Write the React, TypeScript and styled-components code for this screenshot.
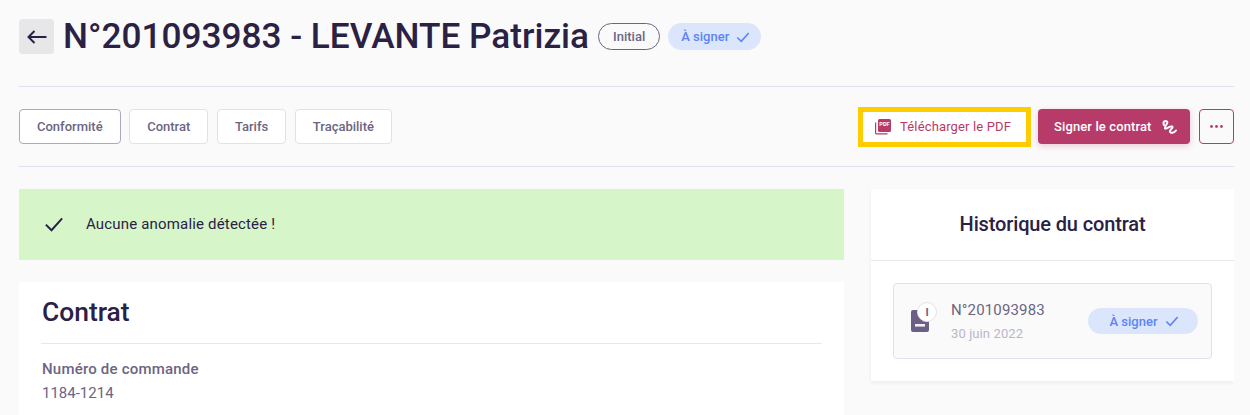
import * as React from "react";
import styled, { createGlobalStyle } from "styled-components";

const GlobalStyle = createGlobalStyle`
  html, body {
    margin: 0;
    height: 100%;
    overflow: hidden;
    background: #fafafb;
    font-family: Roboto, "Liberation Sans", sans-serif;
    color: #2a2145;
  }
`;

const Page = styled.div`
  width: 1215px;
  height: 415px;
  margin-left: 19px;
  overflow: hidden;
`;

const TitleRow = styled.header`
  display: flex;
  align-items: flex-start;
  height: 87px;
  padding-top: 19px;
  box-sizing: border-box;
  border-bottom: 1px solid #dfe0ee;
`;

const BackButton = styled.button`
  width: 35px;
  height: 35px;
  padding: 0;
  margin-right: 9px;
  display: flex;
  align-items: center;
  justify-content: center;
  background: #e7e7ea;
  border: 0;
  border-radius: 4px;
  color: #2a2145;
`;

const Title = styled.h1`
  margin: 0 9px 0 0;
  font-size: 35.2px;
  line-height: 35px;
  font-weight: 500;
  white-space: nowrap;
  color: #2a2145;
`;

const Pill = styled.span<{ $variant: "outline" | "blue"; $wide?: boolean; $tall?: boolean }>`
  display: inline-flex;
  align-items: center;
  justify-content: center;
  gap: 7px;
  box-sizing: border-box;
  height: ${p => (p.$tall ? "27px" : "26px")};
  border-radius: 14px;
  font-size: 13px;
  font-weight: 500;
  white-space: nowrap;
  color: ${p => (p.$variant === "blue" ? "#5b84f5" : "#6c6582")};
  background: ${p => (p.$variant === "blue" ? "#dbe6fd" : "transparent")};
  border: ${p => (p.$variant === "blue" ? "none" : "1px solid #6c6582")};
  width: ${p => (p.$wide ? "110px" : "auto")};
  padding: ${p => (p.$variant === "blue" ? "0 11px 0 13px" : "0 14px")};
`;

const TitlePills = styled.div`
  display: flex;
  gap: 8px;
  margin-top: 4px;
`;

const Toolbar = styled.div`
  display: flex;
  justify-content: space-between;
  align-items: center;
  height: 79px;
  border-bottom: 1px solid #dfe0ee;
`;

const Tabs = styled.nav`
  display: flex;
  gap: 8.6px;
`;

const Tab = styled.button<{ $active?: boolean }>`
  height: 35px;
  padding: 0 17px;
  background: #fff;
  border: 1px solid ${p => (p.$active ? "#a9a9c4" : "#e1e1ee")};
  border-radius: 4px;
  font-family: inherit;
  font-size: 13px;
  font-weight: 500;
  color: #6c6582;
`;

const Actions = styled.div`
  display: flex;
  align-items: center;
`;

const PdfButton = styled.button`
  display: flex;
  align-items: center;
  gap: 9px;
  box-sizing: border-box;
  width: 173px;
  height: 40px;
  margin-right: 7px;
  padding: 0 0 0 12px;
  background: #fff;
  border: 5px solid #ffcc00;
  font-family: inherit;
  font-size: 13px;
  color: #b73b69;
  letter-spacing: 0.15px;
`;

const SignButton = styled.button`
  display: flex;
  align-items: center;
  gap: 9px;
  height: 35px;
  width: 152px;
  padding: 0 0 0 16px;
  margin-right: 9px;
  background: #b73b69;
  border: 0;
  border-radius: 4px;
  box-shadow: 0 2px 6px rgba(183, 59, 105, 0.25);
  font-family: inherit;
  font-size: 13px;
  font-weight: 500;
  letter-spacing: 0.12px;
  color: #fff;
`;

const MoreButton = styled.button`
  display: flex;
  align-items: center;
  justify-content: center;
  width: 35px;
  height: 35px;
  padding: 0;
  background: transparent;
  border: 1px solid #b73b69;
  border-radius: 4px;
`;

const Columns = styled.div`
  display: grid;
  grid-template-columns: 825px 363px;
  column-gap: 27px;
  padding-top: 22px;
`;

const MainColumn = styled.div`
  display: flex;
  flex-direction: column;
  gap: 22px;
`;

const Alert = styled.div`
  display: flex;
  align-items: center;
  gap: 22px;
  height: 71px;
  padding: 0 0 2px 25px;
  box-sizing: border-box;
  background: #d6f5c9;
  font-size: 15px;
  letter-spacing: 0.17px;
  color: #2a2145;
`;

const Card = styled.section`
  background: #fff;
  padding: 0 22px;
  height: 200px;
`;

const CardTitle = styled.h2`
  margin: 0;
  height: 62px;
  box-sizing: border-box;
  padding: 15px 0 0 1px;
  font-size: 26.4px;
  line-height: 30px;
  font-weight: 500;
  border-bottom: 1px solid #e8e8ec;
`;

const FieldLabel = styled.div`
  margin-top: 16px;
  padding-left: 1px;
  font-size: 15px;
  line-height: 18px;
  font-weight: 500;
  letter-spacing: 0.2px;
  color: #6c6582;
`;

const FieldValue = styled.div`
  margin-top: 6px;
  padding-left: 1px;
  font-size: 15px;
  line-height: 18px;
  color: #6c6582;
`;

const SideCard = styled.aside`
  background: #fff;
  height: 192px;
  box-shadow: 0 2px 4px rgba(42, 33, 69, 0.06);
`;

const SideHeader = styled.h3`
  margin: 0;
  height: 72px;
  padding-bottom: 2px;
  box-sizing: border-box;
  display: flex;
  align-items: center;
  justify-content: center;
  font-size: 20px;
  font-weight: 500;
  letter-spacing: -0.14px;
  border-bottom: 1px solid #e8e8ee;
`;

const SideBody = styled.div`
  padding: 22px;
`;

const HistoryItem = styled.div`
  display: flex;
  align-items: center;
  box-sizing: border-box;
  height: 76px;
  padding: 0 13px 0 17px;
  background: #fafafb;
  border: 1px solid #e1e1ee;
  border-radius: 4px;
`;

const DocIcon = styled.div`
  position: relative;
  width: 28px;
  height: 32px;
  margin-right: 12px;
`;

const DocBadge = styled.span`
  position: absolute;
  top: -3px;
  right: 2px;
  width: 20px;
  height: 20px;
  box-sizing: border-box;
  display: flex;
  align-items: center;
  justify-content: center;
  background: #fff;
  border: 1px solid #e1e1ee;
  border-radius: 50%;
  font-size: 11px;
  font-weight: 700;
  color: #6c6582;
`;

const HistoryText = styled.div`
  flex: 1;
  display: flex;
  flex-direction: column;
  gap: 7px;
`;

const HistoryNumber = styled.span`
  font-size: 15px;
  line-height: 18px;
  letter-spacing: 0.15px;
  color: #6c6582;
`;

const HistoryDate = styled.span`
  font-size: 13px;
  line-height: 16px;
  letter-spacing: 0.1px;
  color: #b9b7c8;
`;

const Check = ({ size = 14, width = 1.8 }: { size?: number; width?: number }) => (
  <svg width={size} height={size} viewBox="0 0 16 16" fill="none" stroke="currentColor" strokeWidth={width}>
    <path d="M1.5 8.5 L6 13 L14.5 3.5" />
  </svg>
);

const Arrow = () => (
  <svg width="22" height="16" viewBox="0 0 22 16" fill="none" stroke="currentColor" strokeWidth="2">
    <path d="M20.5 8 H2.5 M8.5 2 L2.5 8 L8.5 14" />
  </svg>
);

const PdfIcon = () => (
  <svg width="16" height="16" viewBox="0 0 16 16" fill="#b73b69">
    <path d="M0 3.5 H1.2 V14.3 H12.5 V15.5 H1.5 A1.5 1.5 0 0 1 0 14 Z" />
    <rect x="3" y="0" width="13" height="13" rx="1.5" />
    <text x="9.5" y="6.8" fontSize="5.5" fontWeight="700" textAnchor="middle" fill="#fff" fontFamily="Roboto">PDF</text>
  </svg>
);

const SignIcon = () => (
  <svg width="16" height="16" viewBox="0 0 16 16" fill="none" stroke="#fff" strokeWidth="2" strokeLinecap="round" strokeLinejoin="round">
    <path d="M3 6 C1.5 3 4 1 6 2.5 C8 4 3 7 4 9.5 C5 11 9 6.5 11 7.5 C13 8.5 8 11 9 13 C10 14.5 13 14 15 11.5" />
  </svg>
);

const Dots = () => (
  <svg width="13" height="3" viewBox="0 0 13 3" fill="#b73b69">
    <circle cx="1.5" cy="1.5" r="1.4" />
    <circle cx="6.5" cy="1.5" r="1.4" />
    <circle cx="11.5" cy="1.5" r="1.4" />
  </svg>
);

const DocShape = () => (
  <svg width="18" height="22" viewBox="0 0 18 22" style={{ position: "absolute", left: 0, bottom: 5 }}>
    <rect x="0" y="0" width="18" height="22" rx="2" fill="#6c5f85" />
    <rect x="4" y="14" width="10" height="2.6" fill="#fff" fillOpacity="0.9" />
  </svg>
);

export default function App() {
  return (
    <Page>
      <GlobalStyle />
      <TitleRow>
        <BackButton><Arrow /></BackButton>
        <Title>N°201093983 - LEVANTE Patrizia</Title>
        <TitlePills>
          <Pill $variant="outline" $tall>Initial</Pill>
          <Pill $variant="blue" $tall>À signer <Check /></Pill>
        </TitlePills>
      </TitleRow>
      <Toolbar>
        <Tabs>
          <Tab $active>Conformité</Tab>
          <Tab>Contrat</Tab>
          <Tab>Tarifs</Tab>
          <Tab>Traçabilité</Tab>
        </Tabs>
        <Actions>
          <PdfButton><PdfIcon /> Télécharger le PDF</PdfButton>
          <SignButton>Signer le contrat <SignIcon /></SignButton>
          <MoreButton><Dots /></MoreButton>
        </Actions>
      </Toolbar>
      <Columns>
        <MainColumn>
          <Alert><Check size={20} width={1.6} /> Aucune anomalie détectée !</Alert>
          <Card>
            <CardTitle>Contrat</CardTitle>
            <FieldLabel>Numéro de commande</FieldLabel>
            <FieldValue>1184-1214</FieldValue>
          </Card>
        </MainColumn>
        <SideCard>
          <SideHeader>Historique du contrat</SideHeader>
          <SideBody>
            <HistoryItem>
              <DocIcon>
                <DocShape />
                <DocBadge>I</DocBadge>
              </DocIcon>
              <HistoryText>
                <HistoryNumber>N°201093983</HistoryNumber>
                <HistoryDate>30 juin 2022</HistoryDate>
              </HistoryText>
              <Pill $variant="blue" $wide>À signer <Check /></Pill>
            </HistoryItem>
          </SideBody>
        </SideCard>
      </Columns>
    </Page>
  );
}
